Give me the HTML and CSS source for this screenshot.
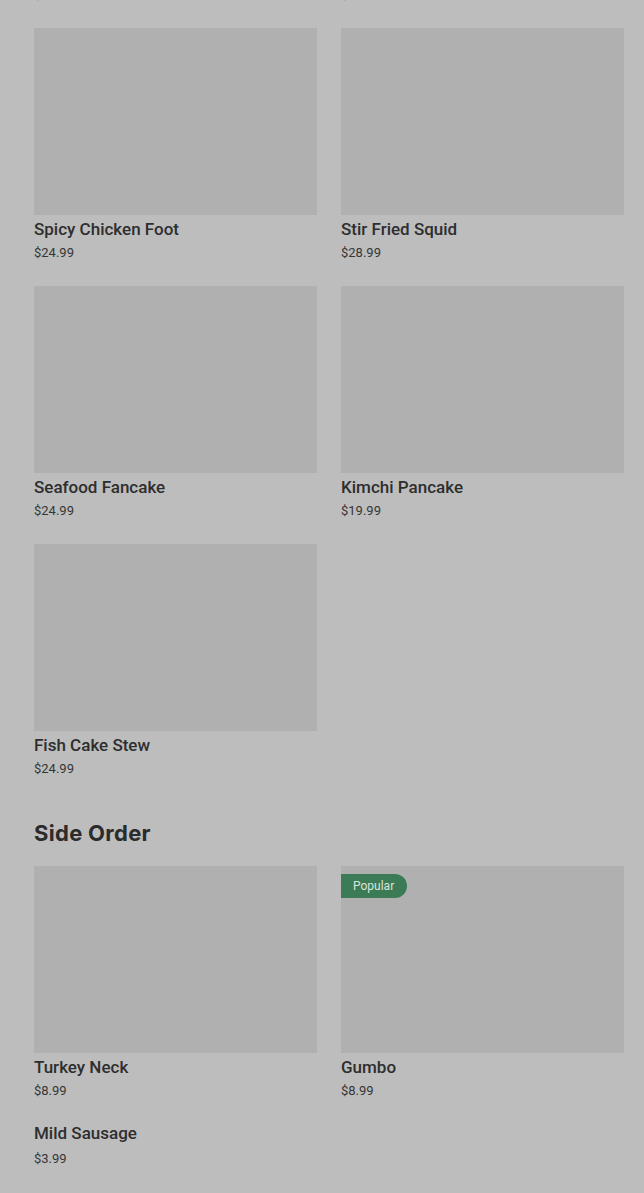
FILE: index.html
```html
<!DOCTYPE html>
<html lang="en">
<head>
    <meta charset="UTF-8">
    <meta name="viewport" content="width=device-width, initial-scale=1.0">
    <title>Menu</title>
    <link rel="stylesheet" href="styles.css">
</head>
<body>

    <main class="menu">
        <!-- Main dishes -->
        <section class="menu__section menu__section--scrolled">
            <div class="menu__grid">
                <div class="item">
                    <div class="item__image"></div>
                    <p class="item__name">Beef Bulgogi</p>
                    <p class="item__price">$26.99</p>
                </div>
                <div class="item">
                    <div class="item__image"></div>
                    <p class="item__name">Spicy Pork</p>
                    <p class="item__price">$24.99</p>
                </div>
                <div class="item">
                    <div class="item__image"></div>
                    <p class="item__name">Spicy Chicken Foot</p>
                    <p class="item__price">$24.99</p>
                </div>
                <div class="item">
                    <div class="item__image"></div>
                    <p class="item__name">Stir Fried Squid</p>
                    <p class="item__price">$28.99</p>
                </div>
                <div class="item">
                    <div class="item__image"></div>
                    <p class="item__name">Seafood Fancake</p>
                    <p class="item__price">$24.99</p>
                </div>
                <div class="item">
                    <div class="item__image"></div>
                    <p class="item__name">Kimchi Pancake</p>
                    <p class="item__price">$19.99</p>
                </div>
                <div class="item">
                    <div class="item__image"></div>
                    <p class="item__name">Fish Cake Stew</p>
                    <p class="item__price">$24.99</p>
                </div>
            </div>
        </section>

        <!-- Side order -->
        <section class="menu__section">
            <h2 class="menu__title">Side Order</h2>
            <div class="menu__grid">
                <div class="item">
                    <div class="item__image"></div>
                    <p class="item__name">Turkey Neck</p>
                    <p class="item__price">$8.99</p>
                </div>
                <div class="item">
                    <div class="item__image">
                        <span class="badge">Popular</span>
                    </div>
                    <p class="item__name">Gumbo</p>
                    <p class="item__price">$8.99</p>
                </div>
                <div class="item item--text">
                    <p class="item__name">Mild Sausage</p>
                    <p class="item__price">$3.99</p>
                </div>
            </div>
        </section>
    </main>

</body>
</html>
```

FILE: styles.css
```css
body {
    margin: 0;
    padding: 0;
    background-color: #bdbdbd;
    font-family: Roboto, "Liberation Sans", Arial, sans-serif;
    color: #2e2e2e;
}

.menu {
    width: 590px;
    margin-left: 34px;
}

.menu__section--scrolled {
    margin-top: -230px;
}

.menu__section + .menu__section {
    margin-top: 40px;
}

.menu__title {
    margin: 0 0 19px 0;
    font-family: Inter, "Liberation Sans", sans-serif;
    font-size: 22px;
    line-height: 28px;
    font-weight: 700;
    letter-spacing: 0.3px;
    color: #2b2b2b;
}

.menu__grid {
    display: grid;
    grid-template-columns: 283px 283px;
    column-gap: 24px;
    row-gap: 23px;
}

.item__image {
    position: relative;
    height: 187px;
    background-color: #b0b0b0;
    margin-bottom: 2px;
}

.item__name {
    margin: 0;
    font-size: 17px;
    line-height: 24px;
    font-weight: 500;
    color: #2e2e2e;
}

.item__price {
    margin: 2px 0 0 0;
    font-size: 13px;
    line-height: 20px;
    color: #363636;
}

.item--text {
    margin-top: -3px;
}

.item--text .item__price {
    margin-top: 4px;
}

/* Badge di atas gambar */
.badge {
    position: absolute;
    top: 8px;
    left: 0;
    height: 24px;
    padding: 0 13px 0 12px;
    border-radius: 0 12px 12px 0;
    background-color: #3b7b56;
    color: #d9e5dc;
    font-size: 12px;
    line-height: 24px;
}
```
